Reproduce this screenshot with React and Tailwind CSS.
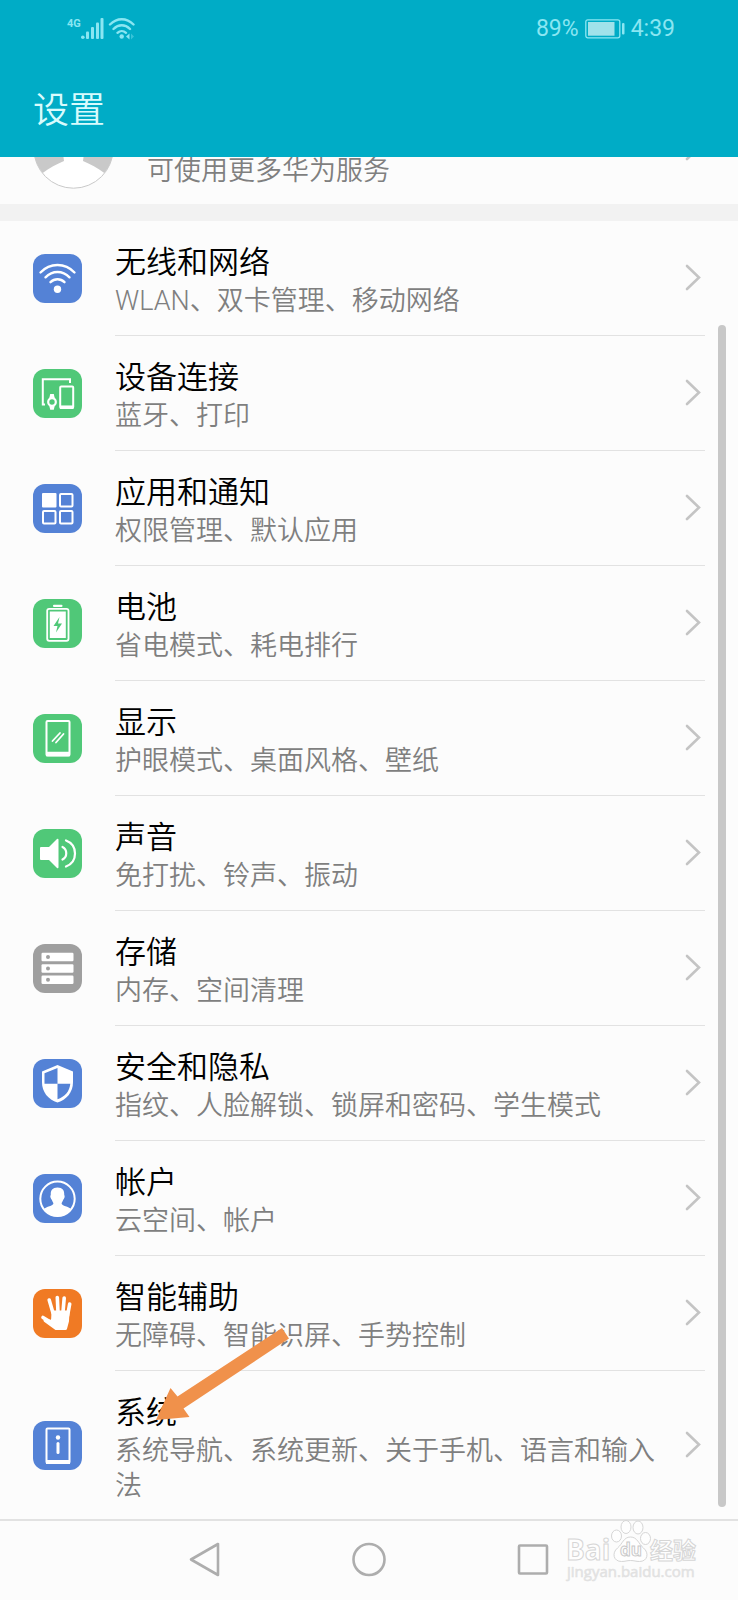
const SETTINGS = [
  { title: '无线和网络', sub: 'WLAN、双卡管理、移动网络', icon: WifiIcon, color: 'bg-[#5482d6]' },
  { title: '设备连接', sub: '蓝牙、打印', icon: DevicesIcon, color: 'bg-[#50c878]' },
  { title: '应用和通知', sub: '权限管理、默认应用', icon: AppsIcon, color: 'bg-[#5482d6]' },
  { title: '电池', sub: '省电模式、耗电排行', icon: BatteryIcon, color: 'bg-[#50c878]' },
  { title: '显示', sub: '护眼模式、桌面风格、壁纸', icon: DisplayIcon, color: 'bg-[#50c878]' },
  { title: '声音', sub: '免打扰、铃声、振动', icon: SoundIcon, color: 'bg-[#50c878]' },
  { title: '存储', sub: '内存、空间清理', icon: StorageIcon, color: 'bg-[#9f9f9f]' },
  { title: '安全和隐私', sub: '指纹、人脸解锁、锁屏和密码、学生模式', icon: ShieldIcon, color: 'bg-[#5482d6]' },
  { title: '帐户', sub: '云空间、帐户', icon: AccountIcon, color: 'bg-[#5482d6]' },
  { title: '智能辅助', sub: '无障碍、智能识屏、手势控制', icon: HandIcon, color: 'bg-[#f07a24]' },
  { title: '系统', sub: '系统导航、系统更新、关于手机、语言和输入法', icon: SystemIcon, color: 'bg-[#5482d6]', arrow: true },
];

function WifiIcon() {
  return (
    <svg viewBox="0 0 49 49" fill="none" stroke="white" strokeWidth="2.4" strokeLinecap="round">
      <path d="M7.5 18.5C17 8.5 32 8.5 41.5 18.5" />
      <path d="M12.5 23.3C19.5 16.3 29.5 16.3 36.5 23.3" />
      <path d="M17.5 28.2C21.5 24.3 27.5 24.3 31.5 28.2" />
      <circle cx="24.5" cy="35.3" r="3.7" fill="white" stroke="none" />
    </svg>
  );
}

function DevicesIcon() {
  return (
    <svg viewBox="0 0 49 49" fill="none" stroke="white" strokeWidth="2">
      <path d="M12 35.5H9.8V10.3H37V14" />
      <rect x="27.2" y="17.5" width="13" height="21.5" rx="1" />
      <path d="M27 38.2h13.4" strokeWidth="3.5" />
      <circle cx="19" cy="33" r="3.8" strokeWidth="2.2" />
      <path d="M17.2 25h3.6l1 4.5h-5.6zM16.2 36.5h5.6l-1 4.3h-3.6z" fill="white" stroke="none" />
    </svg>
  );
}

function AppsIcon() {
  return (
    <svg viewBox="0 0 49 49" fill="none" stroke="white" strokeWidth="2">
      <rect x="9" y="9" width="14.5" height="14.5" rx="1" fill="white" stroke="none" />
      <rect x="27" y="10" width="12.5" height="12.5" rx="1" />
      <rect x="10" y="27" width="12.5" height="12.5" rx="1" />
      <rect x="27" y="27" width="12.5" height="12.5" rx="1" />
    </svg>
  );
}

function BatteryIcon() {
  return (
    <svg viewBox="0 0 49 49">
      <rect x="20" y="5.8" width="9.5" height="2.2" rx="1" fill="white" />
      <rect x="14.2" y="9.8" width="21.3" height="32" rx="2" fill="none" stroke="white" strokeWidth="1.8" />
      <rect x="16.8" y="12.5" width="16" height="26.5" fill="white" />
      <path d="M26.5 18L20.5 27h4l-1.5 6.5 6-9h-4z" fill="#50c878" />
    </svg>
  );
}

function DisplayIcon() {
  return (
    <svg viewBox="0 0 49 49" fill="none" stroke="white" strokeWidth="2">
      <rect x="13.5" y="7" width="23" height="34.5" rx="1" />
      <path d="M13 40h24" strokeWidth="4.5" />
      <path d="M19.5 27l7.5-8M23 28.5l7.5-8.5" strokeLinecap="round" strokeWidth="1.8" />
    </svg>
  );
}

function SoundIcon() {
  return (
    <svg viewBox="0 0 49 49" fill="none" stroke="white" strokeWidth="2.2" strokeLinecap="round">
      <path d="M8 18h8l8-8q1.5-.8 1.5 1v27q0 1.8-1.5 1l-8-8H8q-1 0-1-1V19q0-1 1-1z" fill="white" stroke="none" />
      <path d="M29.5 18C34.5 20.5 34.5 28 29.5 30.5" />
      <path d="M33 11.5C45 16 45 33 33 37.5" />
    </svg>
  );
}

function StorageIcon() {
  return (
    <svg viewBox="0 0 49 49">
      {[8.8, 20.2, 31.5].map(y => (
        <g key={y}>
          <rect x="8.5" y={y} width="32" height="8.5" rx="1.2" fill="white" />
          <circle cx="15" cy={y + 4.2} r="2" fill="#9f9f9f" />
        </g>
      ))}
    </svg>
  );
}

function ShieldIcon() {
  return (
    <svg viewBox="0 0 49 49">
      <path d="M24.5 6L40 12.5V23C40 33 34 40.5 24.5 43.5 15 40.5 9 33 9 23V12.5z" fill="white" />
      <path d="M24.5 9V24.7H11.5V14.3zM24.5 24.7H37.3C36.5 32.5 32 37.5 24.5 40.3z" fill="#5482d6" />
    </svg>
  );
}

function AccountIcon() {
  return (
    <svg viewBox="0 0 49 49">
      <circle cx="24.5" cy="24.8" r="17.2" fill="none" stroke="white" strokeWidth="2" />
      <path d="M24.5 13.5c5 0 7 3 6.7 7 0 .8.8 1.3.3 3-.4 1.4-1 1.5-1.4 2.5-.4 1.5-1.5 2.5-1.5 3.5 0 2.5 7.4 3 9.4 5.5C35 39.5 30 42.5 24.5 42.5S14 39.5 11 35c2-2.5 9.4-3 9.4-5.5 0-1-1.1-2-1.5-3.5-.4-1-1-1.1-1.4-2.5-.5-1.7.3-2.2.3-3-.3-4 1.7-7 6.7-7z" fill="white" />
    </svg>
  );
}

function HandIcon() {
  return (
    <svg viewBox="0 0 49 49" fill="none" stroke="white" strokeWidth="3.6" strokeLinecap="round" strokeLinejoin="round">
      <path d="M16.2 11L20 24M24.3 8.5L25 23M31.2 9L30 23M36.7 15L34.5 27" />
      <path d="M10 28.5L19 34" />
      <path d="M20 23h15l-.5 9-2 7.5h-9.5L12 31.5l7.5 1z" fill="white" strokeWidth="3" />
    </svg>
  );
}

function SystemIcon() {
  return (
    <svg viewBox="0 0 49 49" fill="none" stroke="white" strokeWidth="2">
      <rect x="13.5" y="7.5" width="23" height="34.5" rx="1" />
      <path d="M13 41h24" strokeWidth="4" />
      <circle cx="25" cy="16.5" r="2.2" fill="white" stroke="none" />
      <path d="M25 22.5v9" strokeWidth="3" strokeLinecap="round" />
    </svg>
  );
}

function Chevron() {
  return (
    <svg className="w-4 h-7 shrink-0" viewBox="0 0 16 28" fill="none" stroke="#c4c4c4" strokeWidth="2.6" strokeLinecap="round">
      <path d="M2 2l12 11.5L2 25" />
    </svg>
  );
}

function StatusBar() {
  return (
    <div className="flex justify-between items-center h-[58px] pl-[67px] pr-[63px] text-[#8ae6f2] font-normal">
      <div className="flex items-center">
        <span className="self-start text-[11px] leading-3 font-bold">4G</span>
        <svg className="w-[23px] h-[22px]" viewBox="0 0 23 22" fill="currentColor">
          <circle cx="1.8" cy="19.3" r="1.8" />
          <rect x="5" y="13.5" width="3" height="7.5" rx="1" />
          <rect x="10" y="9" width="3" height="12" rx="1" />
          <rect x="15" y="4.5" width="3" height="16.5" rx="1" />
          <rect x="19.5" y="0" width="3" height="21" rx="1" />
        </svg>
        <svg className="ml-1 w-[27px] h-[22px]" viewBox="0 0 27 22" fill="none" stroke="currentColor" strokeWidth="2.4" strokeLinecap="round">
          <path d="M2 6.5C9 -.5 18.5 -.5 25.5 6.5M5.5 11C10.5 6 17 6 22 11M9.5 14.8C12 12.5 15.5 12.5 18 14.8" />
          <circle cx="13.7" cy="18.5" r="2.2" fill="currentColor" stroke="none" />
          <path d="M21.5 15.5v6l-3.5-3z" fill="currentColor" stroke="none" />
          <path d="M23 15.5v6l3-3z" fill="currentColor" stroke="none" opacity=".4" />
        </svg>
      </div>
      <div className="flex items-center gap-[6px] text-[23px] leading-7">
        <span>89%</span>
        <svg className="w-10 h-5" viewBox="0 0 40 20" fill="none">
          <rect x=".8" y=".8" width="34" height="18" rx="2" stroke="currentColor" strokeWidth="1.3" />
          <rect x="3" y="3" width="26.5" height="13.7" fill="#9fe2ea" />
          <rect x="37" y="4" width="2.5" height="11.5" rx="1" fill="currentColor" />
        </svg>
        <span>4:39</span>
      </div>
    </div>
  );
}

function AccountRow() {
  return (
    <button type="button" className="flex flex-col justify-end w-full h-[47px] overflow-hidden text-left">
      <span className="flex items-center shrink-0 w-full h-28 pl-[33px] pr-[37px]">
        <svg className="w-[81px] h-[81px] shrink-0" viewBox="0 0 81 81">
          <circle cx="40.5" cy="40.5" r="39.7" fill="white" />
          <path d="M.8 42a39.7 39.7 0 0 0 8.9 23C16 60 24 56 31 53L29.5 42zM80.2 42a39.7 39.7 0 0 1-8.9 23C65 60 57 56 50 53L51.5 42z" fill="#c9c9c9" />
          <circle cx="40.5" cy="40.5" r="39.7" fill="none" stroke="#c9c9c9" />
        </svg>
        <span className="self-end flex-1 pb-[19px] ml-[33px] text-[27px] leading-7 text-[#7f7f7f]">可使用更多华为服务</span>
        <Chevron />
      </span>
    </button>
  );
}

function SettingRow({ item, last }) {
  const Icon = item.icon;
  return (
    <li className="relative">
      <button type="button" className="flex items-center w-full pl-[33px] text-left">
        <span className={`${item.color} size-[49px] rounded-[12px] shrink-0`}><Icon /></span>
        <span className={`${last ? '' : 'border-b border-[#e2e2e2]'} flex flex-1 items-center mx-[33px] pr-1`}>
          <span className={`${last ? 'pb-[15px]' : 'pb-4'} flex-1 pt-5 pr-[18px]`}>
            <span className="block text-[31px] leading-[43px] text-black">{item.title}</span>
            <span className="block text-[27px] leading-[35px] text-[#7f7f7f]">{item.sub}</span>
          </span>
          <Chevron />
        </span>
      </button>
      {item.arrow && (
        <svg className="absolute left-[156px] -top-[46px] w-[134px] h-[98px] pointer-events-none" viewBox="0 0 134 98" fill="#f0914b">
          <path d="M0 95L14.5 63l7 8.5L126 3l7 10.5L27.5 83.5l6 8.5z" />
        </svg>
      )}
    </li>
  );
}

function Watermark() {
  return (
    <svg className="absolute right-9 -top-1 w-[140px] h-[68px] pointer-events-none font-['Open_Sans','Noto_Sans_CJK_SC',sans-serif]"
      viewBox="0 0 140 68" fill="#fefefe" stroke="#d6d6d6" strokeWidth="1">
      <ellipse cx="54.5" cy="19" rx="5" ry="6" />
      <ellipse cx="64" cy="10" rx="5" ry="6.5" />
      <ellipse cx="76" cy="10.5" rx="5" ry="6.5" />
      <ellipse cx="83.5" cy="21.5" rx="5" ry="6" />
      <path d="M68.5 20c-7 0-8 7-13 11-6 5-4 13.5 4 13.5 4 0 5-1 9-1s5 1 9 1c8 0 10-8.5 4-13.5-5-4-6-11-13-11z" />
      <text x="4" y="43" fontSize="28" fontWeight="700">Bai</text>
      <text x="58" y="39" fontSize="17" fontWeight="700" stroke="#c9c9c9">du</text>
      <text x="88" y="42" fontSize="23" fontWeight="700">经验</text>
      <text x="5" y="60" fontSize="15" fontWeight="400" fill="#e4e4e4" strokeWidth=".5" stroke="#e0e0e0">jingyan.baidu.com</text>
    </svg>
  );
}

function NavBar() {
  return (
    <nav className="relative border-t-2 border-[#e2e2e2]">
      <div className="grid grid-cols-3 w-2/3 h-[78px] mx-auto">
        <button type="button" aria-label="返回" className="flex items-center justify-center">
          <svg className="w-9 h-9" viewBox="0 0 36 36" fill="none" stroke="#adadad" strokeWidth="2.6" strokeLinejoin="round">
            <path d="M4 17.5L31 2v31z" />
          </svg>
        </button>
        <button type="button" aria-label="主页" className="flex items-center justify-center">
          <svg className="w-9 h-9" viewBox="0 0 36 36" fill="none" stroke="#adadad" strokeWidth="2.6">
            <circle cx="18" cy="17.5" r="15.5" />
          </svg>
        </button>
        <button type="button" aria-label="最近任务" className="flex items-center justify-center">
          <svg className="w-9 h-9" viewBox="0 0 36 36" fill="none" stroke="#adadad" strokeWidth="2.6">
            <rect x="4" y="3.5" width="28" height="28" rx="1" />
          </svg>
        </button>
      </div>
      <Watermark />
    </nav>
  );
}

export default function App() {
  return (
    <div className="min-h-screen bg-[#fcfcfc] font-[350] font-[Roboto,'Noto_Sans_CJK_SC',sans-serif]" lang="zh-CN">
      <header className="h-[157px] bg-[#00acc6]">
        <StatusBar />
        <h1 className="pl-[33px] pt-[26px] text-[36px] leading-[54px] text-[#d8fbfd]">设置</h1>
      </header>

      <main className="relative">
        <AccountRow />
        <div className="h-[17px] bg-[#f2f2f2]" />
        <ul>
          {SETTINGS.map((item, i) => (
            <SettingRow key={item.title} item={item} last={i === SETTINGS.length - 1} />
          ))}
        </ul>
        {/* scroll thumb */}
        <div className="absolute right-3 top-[168px] bottom-3 w-2 rounded-full bg-[#c8c8c8]" />
      </main>

      <NavBar />
    </div>
  );
}
